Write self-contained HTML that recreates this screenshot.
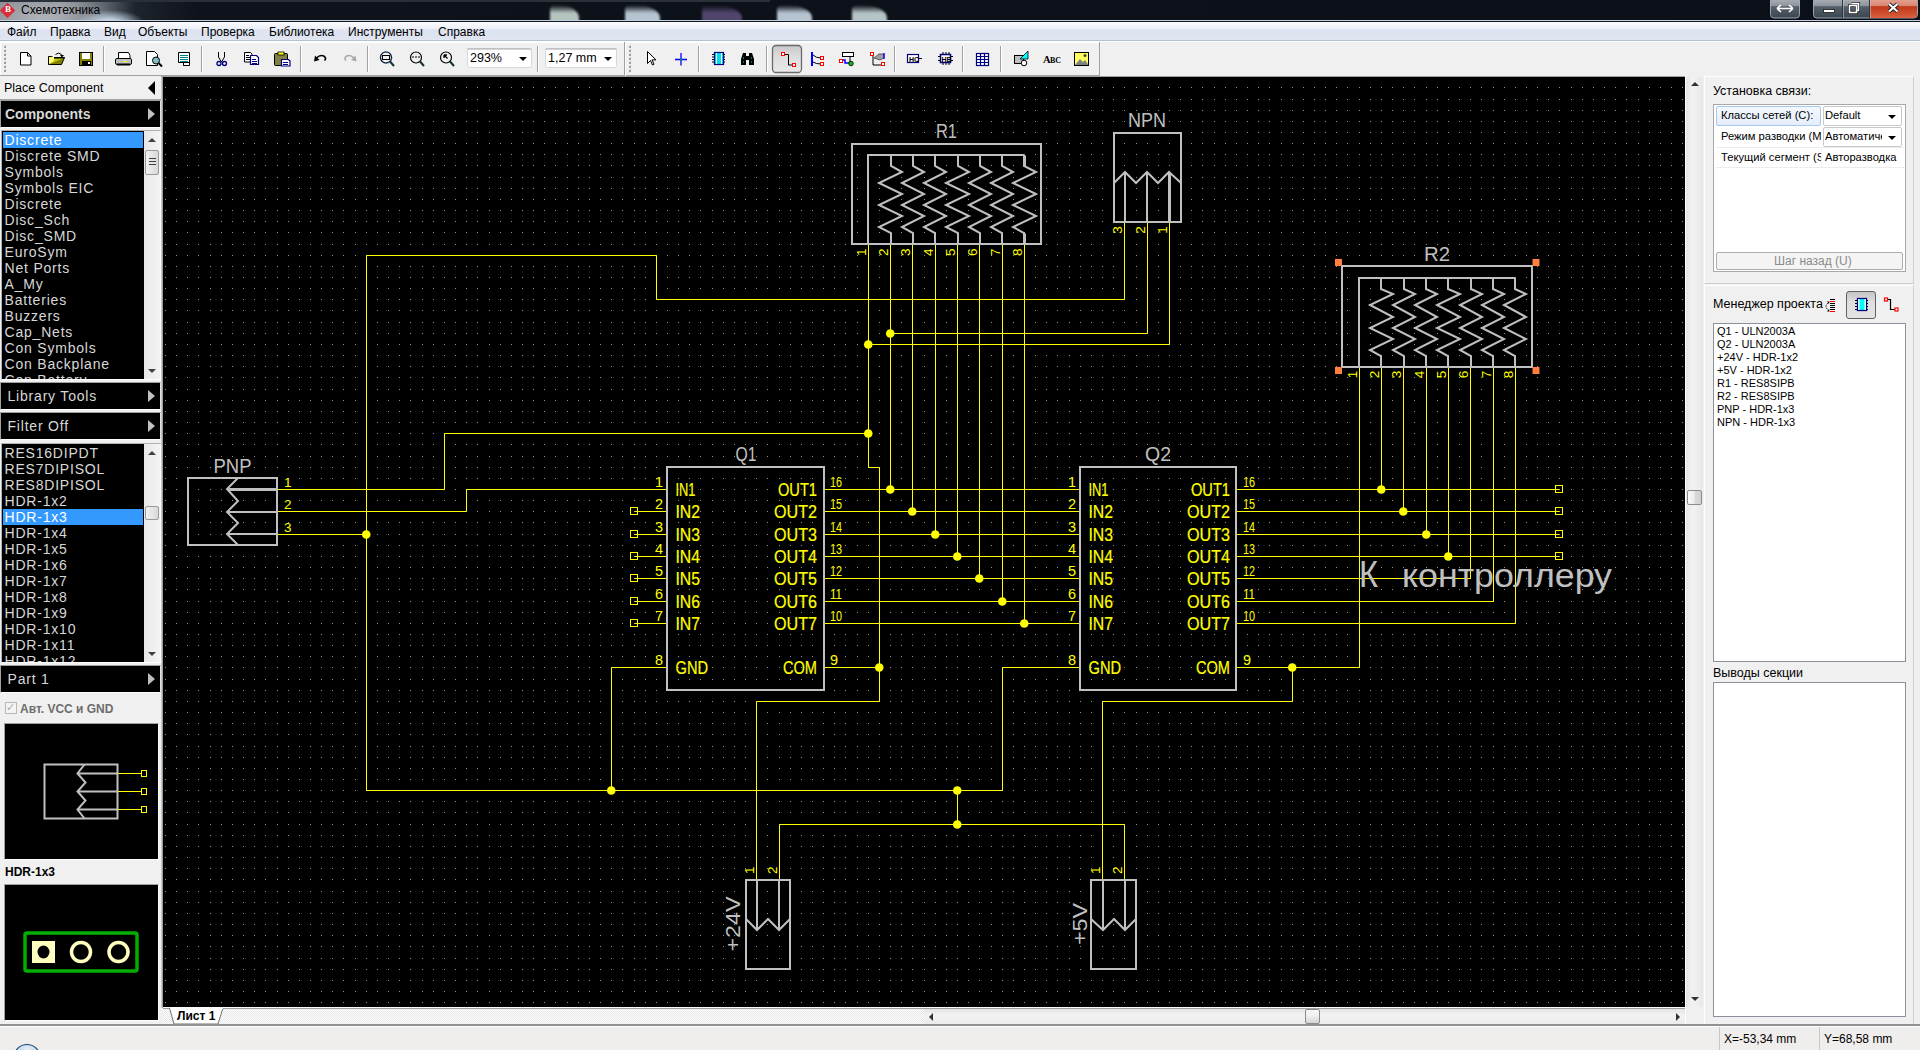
<!DOCTYPE html><html><head><meta charset="utf-8"><style>
*{margin:0;padding:0;box-sizing:border-box}
html,body{width:1920px;height:1050px;overflow:hidden;background:#f0f0f0;font-family:"Liberation Sans",sans-serif;font-size:12px;color:#000}
.a{position:absolute}
.t{position:absolute;white-space:nowrap;line-height:1}
</style></head><body><div class="a" style="left:0;top:0;width:1920px;height:21px;background:radial-gradient(ellipse 34px 12px at 110px 22px,#e4eef8 0%,rgba(200,220,240,0.6) 50%,rgba(200,220,240,0) 100%),radial-gradient(ellipse 70px 30px at 40px 18px,rgba(180,184,190,0.9),rgba(150,155,160,0) 100%),linear-gradient(90deg,#80858b 0px,#8e9398 60px,#5c636b 105px,#1e242c 135px,#0e121a 200px,#0b0f17 1920px)"></div>
<div class="a" style="left:0;top:0;width:770px;height:2px;background:#2a3038"></div>
<div class="a" style="left:550px;top:5px;width:29px;height:18px;background:linear-gradient(rgba(0,0,0,0),#c8d8d0 45%);border-radius:20% 70% 0 0;filter:blur(1.2px);opacity:0.9"></div>
<div class="a" style="left:625px;top:5px;width:35px;height:18px;background:linear-gradient(rgba(0,0,0,0),#c8d8e4 45%);border-radius:20% 70% 0 0;filter:blur(1.2px);opacity:0.9"></div>
<div class="a" style="left:702px;top:5px;width:40px;height:18px;background:linear-gradient(rgba(0,0,0,0),#8870b0 45%);border-radius:20% 70% 0 0;filter:blur(1.2px);opacity:0.55"></div>
<div class="a" style="left:777px;top:5px;width:35px;height:18px;background:linear-gradient(rgba(0,0,0,0),#c8d8e4 45%);border-radius:20% 70% 0 0;filter:blur(1.2px);opacity:0.9"></div>
<div class="a" style="left:852px;top:5px;width:35px;height:18px;background:linear-gradient(rgba(0,0,0,0),#c8d8d8 45%);border-radius:20% 70% 0 0;filter:blur(1.2px);opacity:0.9"></div>
<div class="a" style="left:0;top:20px;width:1920px;height:1px;background:#c7d0d8"></div>
<div class="a" style="left:0;top:21px;width:1920px;height:1px;background:#101828"></div>
<div class="a" style="left:2px;top:5px;width:11px;height:11px;background:#d83038;transform:rotate(45deg)"></div>
<div class="t" style="left:5px;top:5px;font-size:9px;color:#fff;font-family:Liberation Serif,serif;font-weight:bold">B</div>
<div class="t" style="left:21px;top:4px;font-size:12px;color:#000">Схемотехника</div>
<svg class="a" style="left:1760px;top:0" width="160" height="21"><defs><linearGradient id="wb" x1="0" y1="0" x2="0" y2="1"><stop offset="0" stop-color="#b4b8bc"/><stop offset="0.42" stop-color="#8c939a"/><stop offset="0.46" stop-color="#56606a"/><stop offset="1" stop-color="#3a4550"/></linearGradient><linearGradient id="wc" x1="0" y1="0" x2="0" y2="1"><stop offset="0" stop-color="#e8b0a0"/><stop offset="0.42" stop-color="#d88470"/><stop offset="0.46" stop-color="#c03818"/><stop offset="1" stop-color="#d86040"/></linearGradient></defs><rect x="10.5" y="-3" width="29" height="21" rx="3.5" fill="url(#wb)" stroke="#b8c0c8" stroke-opacity="0.8"/><rect x="53.5" y="-3" width="104" height="21" rx="3.5" fill="url(#wb)" stroke="#b8c0c8" stroke-opacity="0.8"/><path d="M109 -3h45q3 0 3 3v15q0 3-3 3h-45z" fill="url(#wc)"/><path d="M82.5 0v18M109.5 0v18" stroke="#303840"/><path d="M83.5 0v18M110.5 0v18" stroke="#c8d0d8" stroke-opacity="0.5"/><path d="M17 8.5h16M17 8.5l4-3.5M17 8.5l4 3.5M33 8.5l-4-3.5M33 8.5l-4 3.5" fill="none" stroke="#fff" stroke-width="1.6"/><rect x="63.5" y="9.5" width="11" height="3" fill="#fff" stroke="#1a1a1a" stroke-width="0.8"/><path d="M91.5 3.5h7v7h-2" fill="none" stroke="#1a1a1a" stroke-width="3"/><rect x="89.5" y="5.5" width="7" height="7" fill="none" stroke="#1a1a1a" stroke-width="3"/><path d="M91.5 3.5h7v7h-2" fill="none" stroke="#fff" stroke-width="1.6"/><rect x="89.5" y="5.5" width="7" height="7" fill="none" stroke="#fff" stroke-width="1.6"/><path d="M129 4l8.5 7.5M137.5 4l-8.5 7.5" stroke="#1a1a1a" stroke-width="3.8"/><path d="M129 4l8.5 7.5M137.5 4l-8.5 7.5" stroke="#fff" stroke-width="2.2"/></svg>
<div class="a" style="left:0;top:22px;width:1920px;height:19px;background:linear-gradient(#fcfcfe 0px,#eef1f8 6px,#dde3f0 8px,#dfe4f1 17px,#e6eaf4 18px);border-bottom:1px solid #b6bfd3"></div>
<div class="a" style="left:0;top:41px;width:1920px;height:1px;background:#fdfdfd"></div>
<div class="t" style="left:7px;top:26px;font-size:12px">Файл</div>
<div class="t" style="left:50px;top:26px;font-size:12px">Правка</div>
<div class="t" style="left:104px;top:26px;font-size:12px">Вид</div>
<div class="t" style="left:138px;top:26px;font-size:12px">Объекты</div>
<div class="t" style="left:201px;top:26px;font-size:12px">Проверка</div>
<div class="t" style="left:269px;top:26px;font-size:12px">Библиотека</div>
<div class="t" style="left:348px;top:26px;font-size:12px">Инструменты</div>
<div class="t" style="left:438px;top:26px;font-size:12px">Справка</div>
<div class="a" style="left:0;top:42px;width:1100px;height:34px;border-right:1px solid #a0a0a0;border-bottom:1px solid #a0a0a0;box-shadow:inset 1px 1px 0 #fff"></div>
<svg class="a" style="left:0;top:0" width="1100" height="80" font-family="Liberation Sans, sans-serif"><rect x="4" y="46" width="2" height="2" fill="#a0a0a0"/><rect x="5" y="45" width="1" height="1" fill="#c8c8c8"/><rect x="4" y="50" width="2" height="2" fill="#a0a0a0"/><rect x="5" y="49" width="1" height="1" fill="#c8c8c8"/><rect x="4" y="54" width="2" height="2" fill="#a0a0a0"/><rect x="5" y="53" width="1" height="1" fill="#c8c8c8"/><rect x="4" y="58" width="2" height="2" fill="#a0a0a0"/><rect x="5" y="57" width="1" height="1" fill="#c8c8c8"/><rect x="4" y="62" width="2" height="2" fill="#a0a0a0"/><rect x="5" y="61" width="1" height="1" fill="#c8c8c8"/><rect x="4" y="66" width="2" height="2" fill="#a0a0a0"/><rect x="5" y="65" width="1" height="1" fill="#c8c8c8"/><rect x="4" y="70" width="2" height="2" fill="#a0a0a0"/><rect x="5" y="69" width="1" height="1" fill="#c8c8c8"/><path d="M20.5 52.5h7l3.5 3.5v9h-10.5z" fill="#fff" stroke="#000"/><path d="M27.5 52.5v3.5h3.5" fill="none" stroke="#000"/><path d="M48.5 56.5v8h13l3-7h-11l-2-1z" fill="#808000" stroke="#000"/><path d="M48.5 64.5l3-6.5h13" fill="#c0c000" stroke="#000"/><path d="M49 57h5v4l-5 3z" fill="#ffff80"/><path d="M55.5 54.5q3-3 6 0l0 2" fill="none" stroke="#000"/><path d="M60 55l2 2.5 2-2.5" fill="#000"/><rect x="79.5" y="52.5" width="13" height="13" fill="#808000" stroke="#000"/><rect x="82" y="53" width="8" height="6" fill="#fff"/><rect x="82" y="61" width="9" height="4" fill="#000"/><rect x="88" y="62" width="2" height="2" fill="#fff"/><rect x="103" y="46" width="1" height="26" fill="#a0a0a0"/><rect x="104" y="46" width="1" height="26" fill="#fff"/><path d="M118.5 52.5h10l1.5 3v3h-11.5z" fill="#fff" stroke="#000"/><rect x="115.5" y="58.5" width="16" height="6" rx="1.5" fill="#c0c0c0" stroke="#000"/><rect x="117" y="63.5" width="13" height="2" fill="#000"/><rect x="123" y="61" width="4" height="1" fill="#ffff00"/><path d="M146.5 51.5h8l3 3v11h-11z" fill="#fff" stroke="#000"/><circle cx="156" cy="60.5" r="3.5" fill="#80c0c0" stroke="#000"/><path d="M158.5 63l3.5 3.5" stroke="#000" stroke-width="2"/><path d="M178.5 52.5h11v13h-6v-3h-5z" fill="#fff" stroke="#000"/><path d="M183.5 65.5v-3h6" fill="none" stroke="#000"/><path d="M180 55.5h8M180 57.5h8M180 59.5h8M180 61.5h8" stroke="#008080"/><rect x="201" y="46" width="1" height="26" fill="#a0a0a0"/><rect x="202" y="46" width="1" height="26" fill="#fff"/><path d="M218.5 52v5l3 5M224.5 52v5l-3 5" fill="none" stroke="#000"/><circle cx="219" cy="63.5" r="2" fill="none" stroke="#000080" stroke-width="1.3"/><circle cx="224.5" cy="63.5" r="2" fill="none" stroke="#000080" stroke-width="1.3"/><path d="M244.5 52.5h6l1.5 1.5v8h-7.5z" fill="#fff" stroke="#000"/><path d="M246 55.5h3M246 57.5h4M246 59.5h4" stroke="#000"/><path d="M250.5 55.5h6l2 2v7h-8z" fill="#fff" stroke="#000080" stroke-width="1.2"/><path d="M252 59.5h4M252 61.5h5M252 63.5h5" stroke="#000080"/><rect x="274.5" y="53.5" width="13" height="12" rx="1" fill="#808040" stroke="#000"/><rect x="278" y="52" width="6" height="3" fill="#ffff00" stroke="#000" stroke-width="0.8"/><path d="M281.5 59.5h7l1.5 1.5v5h-8.5z" fill="#fff" stroke="#000080" stroke-width="1.2"/><path d="M283 62.5h5M283 64.5h5" stroke="#000080"/><rect x="300" y="46" width="1" height="26" fill="#a0a0a0"/><rect x="301" y="46" width="1" height="26" fill="#fff"/><path d="M316.5 58q4-4 8-1.5q2 2 0 4" fill="none" stroke="#000" stroke-width="1.6"/><path d="M314 61.5l1-6 4.5 4.5z" fill="#000"/><path d="M354 58q-4-4-8-1.5q-2 2 0 4" fill="none" stroke="#a8a8a8" stroke-width="1.6"/><path d="M356.5 61.5l-1-6-4.5 4.5z" fill="#a8a8a8"/><rect x="367" y="46" width="1" height="26" fill="#a0a0a0"/><rect x="368" y="46" width="1" height="26" fill="#fff"/><circle cx="386" cy="57.5" r="5.5" fill="none" stroke="#000" stroke-width="1.2"/><path d="M390 61.5l4 4.5" stroke="#103030" stroke-width="2"/><circle cx="386" cy="57.5" r="5.8" fill="none" stroke="#2050a0" stroke-width="1" stroke-dasharray="1.5 1"/><rect x="382.5" y="55.5" width="7" height="4" fill="none" stroke="#000"/><circle cx="416" cy="57.5" r="5.5" fill="none" stroke="#000" stroke-width="1.2"/><path d="M420 61.5l4 4.5" stroke="#103030" stroke-width="2"/><path d="M412 57h8" stroke="#000" stroke-dasharray="2 1"/><circle cx="446" cy="57.5" r="5.5" fill="none" stroke="#000" stroke-width="1.2"/><path d="M450 61.5l4 4.5" stroke="#103030" stroke-width="2"/><path d="M444 55l3.5 3.5M444 55v3M444 55h3" stroke="#000" stroke-width="1.3"/><rect x="467.5" y="48.5" width="64" height="19" rx="2" fill="#fff" stroke="#d4d8e0"/><rect x="467.5" y="48.5" width="64" height="1" fill="#a8a8a8"/><text x="470" y="62" font-size="12.5" fill="#000" font-family="Liberation Sans, sans-serif">293%</text><path d="M519 57h8l-4 4z" fill="#000"/><rect x="537" y="46" width="1" height="26" fill="#a0a0a0"/><rect x="538" y="46" width="1" height="26" fill="#fff"/><rect x="545.5" y="48.5" width="71" height="19" rx="2" fill="#fff" stroke="#d4d8e0"/><rect x="545.5" y="48.5" width="71" height="1" fill="#a8a8a8"/><text x="548" y="62" font-size="12.5" fill="#000" font-family="Liberation Sans, sans-serif">1,27 mm</text><path d="M604 57h8l-4 4z" fill="#000"/><rect x="624" y="42" width="1" height="34" fill="#a0a0a0"/><rect x="625" y="42" width="1" height="34" fill="#fff"/><rect x="629" y="46" width="2" height="2" fill="#a0a0a0"/><rect x="630" y="45" width="1" height="1" fill="#c8c8c8"/><rect x="629" y="50" width="2" height="2" fill="#a0a0a0"/><rect x="630" y="49" width="1" height="1" fill="#c8c8c8"/><rect x="629" y="54" width="2" height="2" fill="#a0a0a0"/><rect x="630" y="53" width="1" height="1" fill="#c8c8c8"/><rect x="629" y="58" width="2" height="2" fill="#a0a0a0"/><rect x="630" y="57" width="1" height="1" fill="#c8c8c8"/><rect x="629" y="62" width="2" height="2" fill="#a0a0a0"/><rect x="630" y="61" width="1" height="1" fill="#c8c8c8"/><rect x="629" y="66" width="2" height="2" fill="#a0a0a0"/><rect x="630" y="65" width="1" height="1" fill="#c8c8c8"/><rect x="629" y="70" width="2" height="2" fill="#a0a0a0"/><rect x="630" y="69" width="1" height="1" fill="#c8c8c8"/><path d="M647.5 51.5v12l3-3 2 4.5 1.5-.8-2-4.3h4z" fill="#fff" stroke="#000"/><path d="M675 59.5h12M681 53v12.5" stroke="#0000ff" stroke-width="1.3"/><rect x="680" y="58.5" width="2" height="2" fill="#008080"/><rect x="698" y="46" width="1" height="26" fill="#a0a0a0"/><rect x="699" y="46" width="1" height="26" fill="#fff"/><path d="M712 54.5h2M712 57h2M712 59.5h2M712 62h2M723 54.5h2M723 57h2M723 59.5h2M723 62h2" stroke="#000"/><rect x="714.5" y="52.5" width="9" height="12" fill="#00e0e8" stroke="#000080" stroke-width="1.2"/><path d="M716.5 53v11M721.5 53v11" stroke="#fff"/><path d="M741 65v-6l2-6h3v12zM749 65v-12h3l2 6v6z" fill="#000"/><rect x="746" y="56" width="3" height="4" fill="#000"/><path d="M743 58h1M743 62h1M751 58h1M751 62h1" stroke="#00e0e0" stroke-width="1.2"/><rect x="766" y="46" width="1" height="26" fill="#a0a0a0"/><rect x="767" y="46" width="1" height="26" fill="#fff"/><defs><linearGradient id="pb" x1="0" y1="0" x2="0" y2="1"><stop offset="0" stop-color="#c8c8c8"/><stop offset="0.45" stop-color="#dedede"/><stop offset="1" stop-color="#e8e8e8"/></linearGradient></defs><rect x="772.5" y="45.5" width="29" height="27" rx="3.5" fill="url(#pb)" stroke="#6a6a6a" stroke-width="1.3"/><path d="M784 54.5h4.5v10.5h5" fill="none" stroke="#000"/><rect x="781.5" y="52.5" width="3" height="3" fill="#fff" stroke="#ff0000"/><rect x="792.5" y="63.5" width="3" height="3" fill="#fff" stroke="#ff0000"/><rect x="811" y="52" width="2" height="14" fill="#0000ff"/><path d="M813 55q3 3 8 3M813 62q3 2 8 2" fill="none" stroke="#000"/><rect x="820.5" y="56.5" width="3" height="3" fill="#fff" stroke="#f00"/><rect x="820.5" y="62.5" width="3" height="3" fill="#fff" stroke="#f00"/><rect x="842.5" y="52.5" width="11" height="4" fill="#fff" stroke="#000"/><path d="M850 57v6" stroke="#000"/><path d="M842 60h3v3h5" fill="none" stroke="#0000ff" stroke-width="1.5"/><rect x="839.5" y="59.5" width="3" height="3" fill="#fff" stroke="#f00"/><circle cx="851" cy="63.5" r="2.3" fill="#00c000" stroke="#000" stroke-width="0.8"/><path d="M873 54v11h10" fill="none" stroke="#000"/><path d="M874 58l5-4h5v4l-4 2z" fill="#a0a0a0" stroke="#404040" stroke-width="0.8"/><path d="M884 53v6" stroke="#0000ff" stroke-width="1.3"/><rect x="870.5" y="52.5" width="3" height="3" fill="#fff" stroke="#f00"/><rect x="881.5" y="62.5" width="3" height="3" fill="#fff" stroke="#f00"/><rect x="894" y="46" width="1" height="26" fill="#a0a0a0"/><rect x="895" y="46" width="1" height="26" fill="#fff"/><rect x="907.5" y="54.5" width="11" height="8" fill="#fff" stroke="#000080" stroke-width="1.2"/><path d="M919 58.5h3" stroke="#000"/><text x="909" y="61.5" font-size="7" font-weight="bold" font-family="Liberation Sans, sans-serif">HC</text><rect x="940.5" y="54.5" width="10" height="8" fill="#fff" stroke="#000080" stroke-width="1.5"/><path d="M943 52v2M946 52v2M949 52v2M943 63v2M946 63v2M949 63v2M938 56.5h2M938 60.5h2M951 56.5h2M951 60.5h2" stroke="#000"/><text x="941.5" y="61.5" font-size="7" font-weight="bold" font-family="Liberation Sans, sans-serif">HB</text><rect x="962" y="46" width="1" height="26" fill="#a0a0a0"/><rect x="963" y="46" width="1" height="26" fill="#fff"/><rect x="976.5" y="53.5" width="12" height="12" fill="#fff" stroke="#000080" stroke-width="1.2"/><path d="M980.5 53.5v12M984.5 53.5v12M976.5 56.5h12M976.5 59.5h12M976.5 62.5h12" stroke="#000080" stroke-width="1.2"/><rect x="1000" y="46" width="1" height="26" fill="#a0a0a0"/><rect x="1001" y="46" width="1" height="26" fill="#fff"/><rect x="1014.5" y="55.5" width="9" height="8" fill="#c0c0c0" stroke="#000"/><circle cx="1024" cy="63" r="2.8" fill="#fff" stroke="#000"/><path d="M1020 59l8-8v8z" fill="#00ffff" stroke="#000" stroke-width="0.8"/><text x="1043" y="62.5" font-size="10.5" font-family="Liberation Serif, serif" font-weight="bold" letter-spacing="-0.5">A</text><text x="1050" y="62.5" font-size="8" font-family="Liberation Serif, serif" font-weight="bold">BC</text><rect x="1074.5" y="52.5" width="14" height="13" fill="#ffff60" stroke="#000"/><path d="M1075 65l5-6 3 3 2-2 3.5 5z" fill="#808080"/><circle cx="1085" cy="55.5" r="1.5" fill="#404040"/></svg>
<div class="a" style="left:0;top:77px;width:161px;height:948px;background:#f0f0f0"></div>
<div class="t" style="left:4px;top:82px;font-size:12.5px">Place Component</div>
<div class="a" style="left:0;top:99px;width:161px;height:1px;background:#a0a0a0"></div>
<div class="a" style="left:148px;top:81px;width:0;height:0;border-top:7px solid transparent;border-bottom:7px solid transparent;border-right:7px solid #000"></div>
<div class="a" style="left:0;top:100px;width:161px;height:28px;border-top:1px solid #a0a0a0;border-left:1px solid #a0a0a0;border-bottom:1px solid #fff;border-right:1px solid #e0e0e0"></div>
<div class="a" style="left:1px;top:101px;width:159px;height:26px;background:#000"></div>
<div class="t" style="left:5px;top:107px;font-size:14px;font-weight:bold;color:#d8d8d8">Components</div>
<div class="a" style="left:148px;top:108px;width:0;height:0;border-top:6.5px solid transparent;border-bottom:6.5px solid transparent;border-left:7px solid #c0c0c0"></div>
<div class="a" style="left:1px;top:130px;width:160px;height:250px;background:#000;border:1px solid #b0b0b0;border-right-color:#fff;border-bottom-color:#fff;overflow:hidden">
<div class="a" style="left:1px;top:1px;width:140px;height:16px;background:#3399ff"></div>
<div class="t" style="left:2.5px;top:2px;font-size:14px;color:#ffffff;letter-spacing:0.8px">Discrete</div>
<div class="t" style="left:2.5px;top:18px;font-size:14px;color:#d8d8d8;letter-spacing:0.8px">Discrete SMD</div>
<div class="t" style="left:2.5px;top:34px;font-size:14px;color:#d8d8d8;letter-spacing:0.8px">Symbols</div>
<div class="t" style="left:2.5px;top:50px;font-size:14px;color:#d8d8d8;letter-spacing:0.8px">Symbols EIC</div>
<div class="t" style="left:2.5px;top:66px;font-size:14px;color:#d8d8d8;letter-spacing:0.8px">Discrete</div>
<div class="t" style="left:2.5px;top:82px;font-size:14px;color:#d8d8d8;letter-spacing:0.8px">Disc_Sch</div>
<div class="t" style="left:2.5px;top:98px;font-size:14px;color:#d8d8d8;letter-spacing:0.8px">Disc_SMD</div>
<div class="t" style="left:2.5px;top:114px;font-size:14px;color:#d8d8d8;letter-spacing:0.8px">EuroSym</div>
<div class="t" style="left:2.5px;top:130px;font-size:14px;color:#d8d8d8;letter-spacing:0.8px">Net Ports</div>
<div class="t" style="left:2.5px;top:146px;font-size:14px;color:#d8d8d8;letter-spacing:0.8px">A_My</div>
<div class="t" style="left:2.5px;top:162px;font-size:14px;color:#d8d8d8;letter-spacing:0.8px">Batteries</div>
<div class="t" style="left:2.5px;top:178px;font-size:14px;color:#d8d8d8;letter-spacing:0.8px">Buzzers</div>
<div class="t" style="left:2.5px;top:194px;font-size:14px;color:#d8d8d8;letter-spacing:0.8px">Cap_Nets</div>
<div class="t" style="left:2.5px;top:210px;font-size:14px;color:#d8d8d8;letter-spacing:0.8px">Con Symbols</div>
<div class="t" style="left:2.5px;top:226px;font-size:14px;color:#d8d8d8;letter-spacing:0.8px">Con Backplane</div>
<div class="t" style="left:2.5px;top:242px;font-size:14px;color:#d8d8d8;letter-spacing:0.8px">Con Battery</div>
<div class="a" style="left:142px;top:0;width:16px;height:248px;background:linear-gradient(90deg,#e8e8e8,#f4f4f4)"></div>
<div class="a" style="left:146px;top:7px;width:0;height:0;border-left:4px solid transparent;border-right:4px solid transparent;border-bottom:4px solid #404040"></div>
<div class="a" style="left:146px;top:238px;width:0;height:0;border-left:4px solid transparent;border-right:4px solid transparent;border-top:4px solid #404040"></div>
<div class="a" style="left:143px;top:19px;width:14px;height:25px;border:1px solid #9a9a9a;border-radius:2px;background:linear-gradient(90deg,#f2f2f2,#d8d8d8)"></div>
<div class="a" style="left:147px;top:27px;width:7px;height:7px;background:repeating-linear-gradient(#404040 0 1px,transparent 1px 3px)"></div>
</div>
<div class="a" style="left:0;top:382px;width:161px;height:28px;border-top:1px solid #a0a0a0;border-left:1px solid #a0a0a0;border-bottom:1px solid #fff;border-right:1px solid #e0e0e0"></div>
<div class="a" style="left:1px;top:383px;width:159px;height:26px;background:#000"></div>
<div class="t" style="left:7.5px;top:389px;font-size:14px;color:#d8d8d8;letter-spacing:0.8px">Library Tools</div>
<div class="a" style="left:148px;top:390px;width:0;height:0;border-top:6.5px solid transparent;border-bottom:6.5px solid transparent;border-left:7px solid #c0c0c0"></div>
<div class="a" style="left:0;top:412px;width:161px;height:28px;border-top:1px solid #a0a0a0;border-left:1px solid #a0a0a0;border-bottom:1px solid #fff;border-right:1px solid #e0e0e0"></div>
<div class="a" style="left:1px;top:413px;width:159px;height:26px;background:#000"></div>
<div class="t" style="left:7.5px;top:419px;font-size:14px;color:#d8d8d8;letter-spacing:0.8px">Filter Off</div>
<div class="a" style="left:148px;top:420px;width:0;height:0;border-top:6.5px solid transparent;border-bottom:6.5px solid transparent;border-left:7px solid #c0c0c0"></div>
<div class="a" style="left:1px;top:443px;width:160px;height:220px;background:#000;border:1px solid #b0b0b0;border-right-color:#fff;border-bottom-color:#fff;overflow:hidden">
<div class="t" style="left:2.5px;top:2px;font-size:14px;color:#d8d8d8;letter-spacing:0.8px">RES16DIPDT</div>
<div class="t" style="left:2.5px;top:18px;font-size:14px;color:#d8d8d8;letter-spacing:0.8px">RES7DIPISOL</div>
<div class="t" style="left:2.5px;top:34px;font-size:14px;color:#d8d8d8;letter-spacing:0.8px">RES8DIPISOL</div>
<div class="t" style="left:2.5px;top:50px;font-size:14px;color:#d8d8d8;letter-spacing:0.8px">HDR-1x2</div>
<div class="a" style="left:1px;top:65px;width:140px;height:16px;background:#3399ff"></div>
<div class="t" style="left:2.5px;top:66px;font-size:14px;color:#ffffff;letter-spacing:0.8px">HDR-1x3</div>
<div class="t" style="left:2.5px;top:82px;font-size:14px;color:#d8d8d8;letter-spacing:0.8px">HDR-1x4</div>
<div class="t" style="left:2.5px;top:98px;font-size:14px;color:#d8d8d8;letter-spacing:0.8px">HDR-1x5</div>
<div class="t" style="left:2.5px;top:114px;font-size:14px;color:#d8d8d8;letter-spacing:0.8px">HDR-1x6</div>
<div class="t" style="left:2.5px;top:130px;font-size:14px;color:#d8d8d8;letter-spacing:0.8px">HDR-1x7</div>
<div class="t" style="left:2.5px;top:146px;font-size:14px;color:#d8d8d8;letter-spacing:0.8px">HDR-1x8</div>
<div class="t" style="left:2.5px;top:162px;font-size:14px;color:#d8d8d8;letter-spacing:0.8px">HDR-1x9</div>
<div class="t" style="left:2.5px;top:178px;font-size:14px;color:#d8d8d8;letter-spacing:0.8px">HDR-1x10</div>
<div class="t" style="left:2.5px;top:194px;font-size:14px;color:#d8d8d8;letter-spacing:0.8px">HDR-1x11</div>
<div class="t" style="left:2.5px;top:210px;font-size:14px;color:#d8d8d8;letter-spacing:0.8px">HDR-1x12</div>
<div class="a" style="left:142px;top:0;width:16px;height:218px;background:linear-gradient(90deg,#e8e8e8,#f4f4f4)"></div>
<div class="a" style="left:146px;top:7px;width:0;height:0;border-left:4px solid transparent;border-right:4px solid transparent;border-bottom:4px solid #404040"></div>
<div class="a" style="left:146px;top:208px;width:0;height:0;border-left:4px solid transparent;border-right:4px solid transparent;border-top:4px solid #404040"></div>
<div class="a" style="left:143px;top:62px;width:14px;height:14px;border:1px solid #9a9a9a;border-radius:2px;background:linear-gradient(90deg,#f2f2f2,#d8d8d8)"></div>
</div>
<div class="a" style="left:0;top:665px;width:161px;height:28px;border-top:1px solid #a0a0a0;border-left:1px solid #a0a0a0;border-bottom:1px solid #fff;border-right:1px solid #e0e0e0"></div>
<div class="a" style="left:1px;top:666px;width:159px;height:26px;background:#000"></div>
<div class="t" style="left:7.5px;top:672px;font-size:14px;color:#d8d8d8;letter-spacing:0.8px">Part 1</div>
<div class="a" style="left:148px;top:673px;width:0;height:0;border-top:6.5px solid transparent;border-bottom:6.5px solid transparent;border-left:7px solid #c0c0c0"></div>
<div class="a" style="left:5px;top:702px;width:12px;height:12px;border:1px solid #b8b8b8;background:#f4f4f4"></div>
<div class="t" style="left:6px;top:702px;font-size:11px;color:#a8a8a8">&#10003;</div>
<div class="t" style="left:20px;top:703px;font-size:12px;font-weight:bold;color:#6d6d6d">Авт. VCC и GND</div>
<div class="a" style="left:4px;top:723px;width:155px;height:137px;background:#000;border:1px solid #a0a0a0;border-right-color:#fff;border-bottom-color:#fff"></div>
<svg class="a" style="left:0;top:0" width="165" height="1050"><rect x="44.5" y="764.5" width="73" height="54" fill="none" stroke="#c0c0c0" stroke-width="2"/><polyline points="84.5,764.5 77.5,773.5 85.5,782.5 77.5,791.5 85.5,800.5 77.5,809.5 84.5,818.5" fill="none" stroke="#c0c0c0" stroke-width="2"/><path d="M77.5 773.5H117.5M77.5 791.5H117.5M77.5 809.5H117.5" stroke="#c0c0c0" stroke-width="2"/><path d="M118 773.5H141M118 791.5H141M118 809.5H141" stroke="#ffff00" stroke-width="1"/><rect x="141.5" y="770.5" width="5" height="6" fill="none" stroke="#ffff00"/><rect x="141.5" y="788.5" width="5" height="6" fill="none" stroke="#ffff00"/><rect x="141.5" y="806.5" width="5" height="6" fill="none" stroke="#ffff00"/></svg>
<div class="t" style="left:5px;top:866px;font-size:12px;font-weight:bold">HDR-1x3</div>
<div class="a" style="left:4px;top:884px;width:155px;height:137px;background:#000;border:1px solid #a0a0a0;border-right-color:#fff;border-bottom-color:#fff"></div>
<svg class="a" style="left:0;top:0" width="165" height="1050"><rect x="25" y="933" width="112" height="38" rx="2" fill="none" stroke="#00b000" stroke-width="3.5"/><rect x="32" y="941" width="23" height="22" fill="#ffffc0"/><ellipse cx="43.5" cy="952" rx="6" ry="6.5" fill="#000"/><circle cx="81" cy="952" r="9.5" fill="none" stroke="#ffffc0" stroke-width="3.5"/><circle cx="118.5" cy="952" r="9.5" fill="none" stroke="#ffffc0" stroke-width="3.5"/></svg>
<div class="a" style="left:161px;top:76px;width:2px;height:932px;background:#a0a0a0;border-left:1px solid #c8c8c8"></div>
<div class="a" style="left:161px;top:76px;width:1525px;height:1px;background:#a0a0a0"></div>
<div class="a" style="left:163px;top:77px;width:1522px;height:930px;background:#000"></div>
<svg width="1920" height="1050" style="position:absolute;left:0;top:0" font-family="Liberation Sans, sans-serif"><defs><path id="dr" d="M165 0h1v1h-1zM176 0h1v1h-1zM187 0h1v1h-1zM198 0h1v1h-1zM210 0h1v1h-1zM221 0h1v1h-1zM232 0h1v1h-1zM243 0h1v1h-1zM254 0h1v1h-1zM265 0h1v1h-1zM277 0h1v1h-1zM288 0h1v1h-1zM299 0h1v1h-1zM310 0h1v1h-1zM321 0h1v1h-1zM332 0h1v1h-1zM343 0h1v1h-1zM355 0h1v1h-1zM366 0h1v1h-1zM377 0h1v1h-1zM388 0h1v1h-1zM399 0h1v1h-1zM410 0h1v1h-1zM422 0h1v1h-1zM433 0h1v1h-1zM444 0h1v1h-1zM455 0h1v1h-1zM466 0h1v1h-1zM477 0h1v1h-1zM489 0h1v1h-1zM500 0h1v1h-1zM511 0h1v1h-1zM522 0h1v1h-1zM533 0h1v1h-1zM544 0h1v1h-1zM555 0h1v1h-1zM567 0h1v1h-1zM578 0h1v1h-1zM589 0h1v1h-1zM600 0h1v1h-1zM611 0h1v1h-1zM622 0h1v1h-1zM634 0h1v1h-1zM645 0h1v1h-1zM656 0h1v1h-1zM667 0h1v1h-1zM678 0h1v1h-1zM689 0h1v1h-1zM700 0h1v1h-1zM712 0h1v1h-1zM723 0h1v1h-1zM734 0h1v1h-1zM745 0h1v1h-1zM756 0h1v1h-1zM767 0h1v1h-1zM779 0h1v1h-1zM790 0h1v1h-1zM801 0h1v1h-1zM812 0h1v1h-1zM823 0h1v1h-1zM834 0h1v1h-1zM845 0h1v1h-1zM857 0h1v1h-1zM868 0h1v1h-1zM879 0h1v1h-1zM890 0h1v1h-1zM901 0h1v1h-1zM912 0h1v1h-1zM924 0h1v1h-1zM935 0h1v1h-1zM946 0h1v1h-1zM957 0h1v1h-1zM968 0h1v1h-1zM979 0h1v1h-1zM991 0h1v1h-1zM1002 0h1v1h-1zM1013 0h1v1h-1zM1024 0h1v1h-1zM1035 0h1v1h-1zM1046 0h1v1h-1zM1057 0h1v1h-1zM1069 0h1v1h-1zM1080 0h1v1h-1zM1091 0h1v1h-1zM1102 0h1v1h-1zM1113 0h1v1h-1zM1124 0h1v1h-1zM1136 0h1v1h-1zM1147 0h1v1h-1zM1158 0h1v1h-1zM1169 0h1v1h-1zM1180 0h1v1h-1zM1191 0h1v1h-1zM1202 0h1v1h-1zM1214 0h1v1h-1zM1225 0h1v1h-1zM1236 0h1v1h-1zM1247 0h1v1h-1zM1258 0h1v1h-1zM1269 0h1v1h-1zM1281 0h1v1h-1zM1292 0h1v1h-1zM1303 0h1v1h-1zM1314 0h1v1h-1zM1325 0h1v1h-1zM1336 0h1v1h-1zM1347 0h1v1h-1zM1359 0h1v1h-1zM1370 0h1v1h-1zM1381 0h1v1h-1zM1392 0h1v1h-1zM1403 0h1v1h-1zM1414 0h1v1h-1zM1426 0h1v1h-1zM1437 0h1v1h-1zM1448 0h1v1h-1zM1459 0h1v1h-1zM1470 0h1v1h-1zM1481 0h1v1h-1zM1493 0h1v1h-1zM1504 0h1v1h-1zM1515 0h1v1h-1zM1526 0h1v1h-1zM1537 0h1v1h-1zM1548 0h1v1h-1zM1559 0h1v1h-1zM1571 0h1v1h-1zM1582 0h1v1h-1zM1593 0h1v1h-1zM1604 0h1v1h-1zM1615 0h1v1h-1zM1626 0h1v1h-1zM1638 0h1v1h-1zM1649 0h1v1h-1zM1660 0h1v1h-1zM1671 0h1v1h-1zM1682 0h1v1h-1z" fill="#909090"/></defs>
<use href="#dr" y="87"/>
<use href="#dr" y="99"/>
<use href="#dr" y="110"/>
<use href="#dr" y="121"/>
<use href="#dr" y="132"/>
<use href="#dr" y="143"/>
<use href="#dr" y="154"/>
<use href="#dr" y="165"/>
<use href="#dr" y="177"/>
<use href="#dr" y="188"/>
<use href="#dr" y="199"/>
<use href="#dr" y="210"/>
<use href="#dr" y="221"/>
<use href="#dr" y="232"/>
<use href="#dr" y="244"/>
<use href="#dr" y="255"/>
<use href="#dr" y="266"/>
<use href="#dr" y="277"/>
<use href="#dr" y="288"/>
<use href="#dr" y="299"/>
<use href="#dr" y="310"/>
<use href="#dr" y="322"/>
<use href="#dr" y="333"/>
<use href="#dr" y="344"/>
<use href="#dr" y="355"/>
<use href="#dr" y="366"/>
<use href="#dr" y="377"/>
<use href="#dr" y="389"/>
<use href="#dr" y="400"/>
<use href="#dr" y="411"/>
<use href="#dr" y="422"/>
<use href="#dr" y="433"/>
<use href="#dr" y="444"/>
<use href="#dr" y="456"/>
<use href="#dr" y="467"/>
<use href="#dr" y="478"/>
<use href="#dr" y="489"/>
<use href="#dr" y="500"/>
<use href="#dr" y="511"/>
<use href="#dr" y="522"/>
<use href="#dr" y="534"/>
<use href="#dr" y="545"/>
<use href="#dr" y="556"/>
<use href="#dr" y="567"/>
<use href="#dr" y="578"/>
<use href="#dr" y="589"/>
<use href="#dr" y="601"/>
<use href="#dr" y="612"/>
<use href="#dr" y="623"/>
<use href="#dr" y="634"/>
<use href="#dr" y="645"/>
<use href="#dr" y="656"/>
<use href="#dr" y="667"/>
<use href="#dr" y="679"/>
<use href="#dr" y="690"/>
<use href="#dr" y="701"/>
<use href="#dr" y="712"/>
<use href="#dr" y="723"/>
<use href="#dr" y="734"/>
<use href="#dr" y="746"/>
<use href="#dr" y="757"/>
<use href="#dr" y="768"/>
<use href="#dr" y="779"/>
<use href="#dr" y="790"/>
<use href="#dr" y="801"/>
<use href="#dr" y="812"/>
<use href="#dr" y="824"/>
<use href="#dr" y="835"/>
<use href="#dr" y="846"/>
<use href="#dr" y="857"/>
<use href="#dr" y="868"/>
<use href="#dr" y="879"/>
<use href="#dr" y="891"/>
<use href="#dr" y="902"/>
<use href="#dr" y="913"/>
<use href="#dr" y="924"/>
<use href="#dr" y="935"/>
<use href="#dr" y="946"/>
<use href="#dr" y="958"/>
<use href="#dr" y="969"/>
<use href="#dr" y="980"/>
<use href="#dr" y="991"/>
<use href="#dr" y="1002"/>
<polyline points="277.5,489.5 444.5,489.5 444.5,433.5 868.5,433.5" fill="none" stroke="#ffff00" stroke-width="1" />
<polyline points="277.5,511.5 466.5,511.5 466.5,489.5 667.5,489.5" fill="none" stroke="#ffff00" stroke-width="1" />
<polyline points="277.5,534.5 366.5,534.5" fill="none" stroke="#ffff00" stroke-width="1" />
<polyline points="1124.5,221.5 1124.5,299.5 656.5,299.5 656.5,255.5 366.5,255.5 366.5,790.5 1002.5,790.5 1002.5,667.5 1080.5,667.5" fill="none" stroke="#ffff00" stroke-width="1" />
<polyline points="1147.5,221.5 1147.5,333.5 890.5,333.5" fill="none" stroke="#ffff00" stroke-width="1" />
<polyline points="1169.5,221.5 1169.5,344.5 868.5,344.5" fill="none" stroke="#ffff00" stroke-width="1" />
<polyline points="868.5,244.5 868.5,467.5 879.5,467.5 879.5,701.5 756.5,701.5 756.5,879.5" fill="none" stroke="#ffff00" stroke-width="1" />
<polyline points="890.5,244.5 890.5,489.5" fill="none" stroke="#ffff00" stroke-width="1" />
<polyline points="912.5,244.5 912.5,511.5" fill="none" stroke="#ffff00" stroke-width="1" />
<polyline points="935.5,244.5 935.5,534.5" fill="none" stroke="#ffff00" stroke-width="1" />
<polyline points="957.5,244.5 957.5,556.5" fill="none" stroke="#ffff00" stroke-width="1" />
<polyline points="979.5,244.5 979.5,578.5" fill="none" stroke="#ffff00" stroke-width="1" />
<polyline points="1002.5,244.5 1002.5,601.5" fill="none" stroke="#ffff00" stroke-width="1" />
<polyline points="1024.5,244.5 1024.5,623.5" fill="none" stroke="#ffff00" stroke-width="1" />
<polyline points="823.5,489.5 1080.5,489.5" fill="none" stroke="#ffff00" stroke-width="1" />
<polyline points="823.5,511.5 1080.5,511.5" fill="none" stroke="#ffff00" stroke-width="1" />
<polyline points="823.5,534.5 1080.5,534.5" fill="none" stroke="#ffff00" stroke-width="1" />
<polyline points="823.5,556.5 1080.5,556.5" fill="none" stroke="#ffff00" stroke-width="1" />
<polyline points="823.5,578.5 1080.5,578.5" fill="none" stroke="#ffff00" stroke-width="1" />
<polyline points="823.5,601.5 1080.5,601.5" fill="none" stroke="#ffff00" stroke-width="1" />
<polyline points="823.5,623.5 1080.5,623.5" fill="none" stroke="#ffff00" stroke-width="1" />
<polyline points="823.5,667.5 879.5,667.5" fill="none" stroke="#ffff00" stroke-width="1" />
<polyline points="667.5,667.5 611.5,667.5 611.5,790.5" fill="none" stroke="#ffff00" stroke-width="1" />
<polyline points="1236.5,667.5 1359.5,667.5 1359.5,366.5" fill="none" stroke="#ffff00" stroke-width="1" />
<polyline points="1292.5,667.5 1292.5,701.5 1102.5,701.5 1102.5,879.5" fill="none" stroke="#ffff00" stroke-width="1" />
<polyline points="957.5,790.5 957.5,824.5" fill="none" stroke="#ffff00" stroke-width="1" />
<polyline points="779.5,879.5 779.5,824.5 1124.5,824.5 1124.5,879.5" fill="none" stroke="#ffff00" stroke-width="1" />
<polyline points="1236.5,489.5 1559.5,489.5" fill="none" stroke="#ffff00" stroke-width="1" />
<polyline points="1381.5,366.5 1381.5,489.5" fill="none" stroke="#ffff00" stroke-width="1" />
<rect x="1555.5" y="485.5" width="7" height="7" fill="none" stroke="#ffff00" stroke-width="1"/>
<polyline points="1236.5,511.5 1559.5,511.5" fill="none" stroke="#ffff00" stroke-width="1" />
<polyline points="1403.5,366.5 1403.5,511.5" fill="none" stroke="#ffff00" stroke-width="1" />
<rect x="1555.5" y="507.5" width="7" height="7" fill="none" stroke="#ffff00" stroke-width="1"/>
<polyline points="1236.5,534.5 1559.5,534.5" fill="none" stroke="#ffff00" stroke-width="1" />
<polyline points="1426.5,366.5 1426.5,534.5" fill="none" stroke="#ffff00" stroke-width="1" />
<rect x="1555.5" y="530.5" width="7" height="7" fill="none" stroke="#ffff00" stroke-width="1"/>
<polyline points="1236.5,556.5 1559.5,556.5" fill="none" stroke="#ffff00" stroke-width="1" />
<polyline points="1448.5,366.5 1448.5,556.5" fill="none" stroke="#ffff00" stroke-width="1" />
<rect x="1555.5" y="552.5" width="7" height="7" fill="none" stroke="#ffff00" stroke-width="1"/>
<polyline points="1236.5,578.5 1470.5,578.5 1470.5,366.5" fill="none" stroke="#ffff00" stroke-width="1" />
<polyline points="1236.5,601.5 1493.5,601.5 1493.5,366.5" fill="none" stroke="#ffff00" stroke-width="1" />
<polyline points="1236.5,623.5 1515.5,623.5 1515.5,366.5" fill="none" stroke="#ffff00" stroke-width="1" />
<polyline points="634.5,511.5 667.5,511.5" fill="none" stroke="#ffff00" stroke-width="1" />
<rect x="630.5" y="507.5" width="7" height="7" fill="none" stroke="#ffff00" stroke-width="1"/>
<polyline points="634.5,534.5 667.5,534.5" fill="none" stroke="#ffff00" stroke-width="1" />
<rect x="630.5" y="530.5" width="7" height="7" fill="none" stroke="#ffff00" stroke-width="1"/>
<polyline points="634.5,556.5 667.5,556.5" fill="none" stroke="#ffff00" stroke-width="1" />
<rect x="630.5" y="552.5" width="7" height="7" fill="none" stroke="#ffff00" stroke-width="1"/>
<polyline points="634.5,578.5 667.5,578.5" fill="none" stroke="#ffff00" stroke-width="1" />
<rect x="630.5" y="574.5" width="7" height="7" fill="none" stroke="#ffff00" stroke-width="1"/>
<polyline points="634.5,601.5 667.5,601.5" fill="none" stroke="#ffff00" stroke-width="1" />
<rect x="630.5" y="597.5" width="7" height="7" fill="none" stroke="#ffff00" stroke-width="1"/>
<polyline points="634.5,623.5 667.5,623.5" fill="none" stroke="#ffff00" stroke-width="1" />
<rect x="630.5" y="619.5" width="7" height="7" fill="none" stroke="#ffff00" stroke-width="1"/>
<circle cx="366.25" cy="534.5" r="4.3" fill="#ffff00"/>
<circle cx="611.25" cy="790.5" r="4.3" fill="#ffff00"/>
<circle cx="957.25" cy="790.5" r="4.3" fill="#ffff00"/>
<circle cx="957.25" cy="824.5" r="4.3" fill="#ffff00"/>
<circle cx="868.25" cy="344.5" r="4.3" fill="#ffff00"/>
<circle cx="890.25" cy="333.5" r="4.3" fill="#ffff00"/>
<circle cx="868.25" cy="433.5" r="4.3" fill="#ffff00"/>
<circle cx="879.25" cy="667.5" r="4.3" fill="#ffff00"/>
<circle cx="1292.25" cy="667.5" r="4.3" fill="#ffff00"/>
<circle cx="890.25" cy="489.5" r="4.3" fill="#ffff00"/>
<circle cx="912.25" cy="511.5" r="4.3" fill="#ffff00"/>
<circle cx="935.25" cy="534.5" r="4.3" fill="#ffff00"/>
<circle cx="957.25" cy="556.5" r="4.3" fill="#ffff00"/>
<circle cx="979.25" cy="578.5" r="4.3" fill="#ffff00"/>
<circle cx="1002.25" cy="601.5" r="4.3" fill="#ffff00"/>
<circle cx="1024.25" cy="623.5" r="4.3" fill="#ffff00"/>
<circle cx="1381.25" cy="489.5" r="4.3" fill="#ffff00"/>
<circle cx="1403.25" cy="511.5" r="4.3" fill="#ffff00"/>
<circle cx="1426.25" cy="534.5" r="4.3" fill="#ffff00"/>
<circle cx="1448.25" cy="556.5" r="4.3" fill="#ffff00"/>
<rect x="188" y="478" width="89" height="67" fill="none" stroke="#c0c0c0" stroke-width="2"/>
<polyline points="227,489 277,489" fill="none" stroke="#c0c0c0" stroke-width="2" stroke-linejoin="miter"/>
<polyline points="227,512 277,512" fill="none" stroke="#c0c0c0" stroke-width="2" stroke-linejoin="miter"/>
<polyline points="227,534 277,534" fill="none" stroke="#c0c0c0" stroke-width="2" stroke-linejoin="miter"/>
<polyline points="238,478 227,489 238,501 227,512 238,523 227,534 238,545" fill="none" stroke="#c0c0c0" stroke-width="2" stroke-linejoin="miter"/>
<rect x="1114" y="133" width="67" height="89" fill="none" stroke="#c0c0c0" stroke-width="2"/>
<polyline points="1125,172 1125,222" fill="none" stroke="#c0c0c0" stroke-width="2" stroke-linejoin="miter"/>
<polyline points="1147,172 1147,222" fill="none" stroke="#c0c0c0" stroke-width="2" stroke-linejoin="miter"/>
<polyline points="1169,172 1169,222" fill="none" stroke="#c0c0c0" stroke-width="2" stroke-linejoin="miter"/>
<polyline points="1114,183 1125,172 1136,183 1147,172 1158,183 1169,172 1181,183" fill="none" stroke="#c0c0c0" stroke-width="2" stroke-linejoin="miter"/>
<rect x="852" y="144" width="189" height="100" fill="none" stroke="#c0c0c0" stroke-width="2"/>
<polyline points="868,244 868,155 1024,155" fill="none" stroke="#c0c0c0" stroke-width="2" stroke-linejoin="miter"/>
<polyline points="891,155 891,166 902,172 879,183 902,194 879,205 902,216 879,227 891,233 891,244" fill="none" stroke="#c0c0c0" stroke-width="2" stroke-linejoin="miter"/>
<polyline points="913,155 913,166 924,172 902,183 924,194 902,205 924,216 902,227 913,233 913,244" fill="none" stroke="#c0c0c0" stroke-width="2" stroke-linejoin="miter"/>
<polyline points="935,155 935,166 946,172 924,183 946,194 924,205 946,216 924,227 935,233 935,244" fill="none" stroke="#c0c0c0" stroke-width="2" stroke-linejoin="miter"/>
<polyline points="958,155 958,166 969,172 946,183 969,194 946,205 969,216 946,227 958,233 958,244" fill="none" stroke="#c0c0c0" stroke-width="2" stroke-linejoin="miter"/>
<polyline points="980,155 980,166 991,172 969,183 991,194 969,205 991,216 969,227 980,233 980,244" fill="none" stroke="#c0c0c0" stroke-width="2" stroke-linejoin="miter"/>
<polyline points="1002,155 1002,166 1013,172 991,183 1013,194 991,205 1013,216 991,227 1002,233 1002,244" fill="none" stroke="#c0c0c0" stroke-width="2" stroke-linejoin="miter"/>
<polyline points="1024,155 1024,166 1036,172 1013,183 1036,194 1013,205 1036,216 1013,227 1024,233 1024,244" fill="none" stroke="#c0c0c0" stroke-width="2" stroke-linejoin="miter"/>
<rect x="1342" y="266" width="190" height="101" fill="none" stroke="#c0c0c0" stroke-width="2"/>
<polyline points="1359,367 1359,278 1515,278" fill="none" stroke="#c0c0c0" stroke-width="2" stroke-linejoin="miter"/>
<polyline points="1381,278 1381,289 1393,294 1370,305 1393,317 1370,328 1393,339 1370,350 1381,356 1381,367" fill="none" stroke="#c0c0c0" stroke-width="2" stroke-linejoin="miter"/>
<polyline points="1404,278 1404,289 1415,294 1393,305 1415,317 1393,328 1415,339 1393,350 1404,356 1404,367" fill="none" stroke="#c0c0c0" stroke-width="2" stroke-linejoin="miter"/>
<polyline points="1426,278 1426,289 1437,294 1415,305 1437,317 1415,328 1437,339 1415,350 1426,356 1426,367" fill="none" stroke="#c0c0c0" stroke-width="2" stroke-linejoin="miter"/>
<polyline points="1448,278 1448,289 1460,294 1437,305 1460,317 1437,328 1460,339 1437,350 1448,356 1448,367" fill="none" stroke="#c0c0c0" stroke-width="2" stroke-linejoin="miter"/>
<polyline points="1471,278 1471,289 1482,294 1460,305 1482,317 1460,328 1482,339 1460,350 1471,356 1471,367" fill="none" stroke="#c0c0c0" stroke-width="2" stroke-linejoin="miter"/>
<polyline points="1493,278 1493,289 1504,294 1482,305 1504,317 1482,328 1504,339 1482,350 1493,356 1493,367" fill="none" stroke="#c0c0c0" stroke-width="2" stroke-linejoin="miter"/>
<polyline points="1515,278 1515,289 1526,294 1504,305 1526,317 1504,328 1526,339 1504,350 1515,356 1515,367" fill="none" stroke="#c0c0c0" stroke-width="2" stroke-linejoin="miter"/>
<rect x="746" y="880" width="44" height="89" fill="none" stroke="#c0c0c0" stroke-width="2"/>
<polyline points="757,880 757,930" fill="none" stroke="#c0c0c0" stroke-width="2" stroke-linejoin="miter"/>
<polyline points="779,880 779,930" fill="none" stroke="#c0c0c0" stroke-width="2" stroke-linejoin="miter"/>
<polyline points="746,919 757,930 768,919 779,930 790,919" fill="none" stroke="#c0c0c0" stroke-width="2" stroke-linejoin="miter"/>
<rect x="1091" y="880" width="45" height="89" fill="none" stroke="#c0c0c0" stroke-width="2"/>
<polyline points="1103,880 1103,930" fill="none" stroke="#c0c0c0" stroke-width="2" stroke-linejoin="miter"/>
<polyline points="1125,880 1125,930" fill="none" stroke="#c0c0c0" stroke-width="2" stroke-linejoin="miter"/>
<polyline points="1091,919 1103,930 1114,919 1125,930 1136,919" fill="none" stroke="#c0c0c0" stroke-width="2" stroke-linejoin="miter"/>
<rect x="667" y="467" width="157" height="223" fill="none" stroke="#c0c0c0" stroke-width="2"/>
<rect x="1080" y="467" width="156" height="223" fill="none" stroke="#c0c0c0" stroke-width="2"/>
<polyline points="1024.5,155.5 1024.5,166.5" fill="none" stroke="#c0c0c0" stroke-width="3" stroke-linejoin="miter"/>
<polyline points="1024.5,233.5 1024.5,244.5" fill="none" stroke="#c0c0c0" stroke-width="3" stroke-linejoin="miter"/>
<polyline points="1169.5,172.5 1169.5,222.5" fill="none" stroke="#c0c0c0" stroke-width="3" stroke-linejoin="miter"/>
<polyline points="227.5,489.5 277.5,489.5" fill="none" stroke="#c0c0c0" stroke-width="3" stroke-linejoin="miter"/>
<rect x="1335.0" y="259.0" width="7" height="7" fill="#ff8040"/>
<rect x="1532.5" y="259.0" width="7" height="7" fill="#ff8040"/>
<rect x="1335.0" y="367.0" width="7" height="7" fill="#ff8040"/>
<rect x="1532.5" y="367.0" width="7" height="7" fill="#ff8040"/>
<text x="675.5" y="496" font-size="18" fill="#ffff00" text-anchor="start" textLength="20" lengthAdjust="spacingAndGlyphs" stroke="#ffff00" stroke-width="0.2">IN1</text>
<text x="817" y="496" font-size="18" fill="#ffff00" text-anchor="end" textLength="39" lengthAdjust="spacingAndGlyphs" stroke="#ffff00" stroke-width="0.2">OUT1</text>
<text x="663" y="487" font-size="14.5" fill="#ffff00" text-anchor="end" >1</text>
<text x="830" y="487" font-size="14" fill="#ffff00" text-anchor="start" textLength="12" lengthAdjust="spacingAndGlyphs" >16</text>
<text x="675.5" y="518" font-size="18" fill="#ffff00" text-anchor="start" textLength="24.5" lengthAdjust="spacingAndGlyphs" stroke="#ffff00" stroke-width="0.2">IN2</text>
<text x="817" y="518" font-size="18" fill="#ffff00" text-anchor="end" textLength="43" lengthAdjust="spacingAndGlyphs" stroke="#ffff00" stroke-width="0.2">OUT2</text>
<text x="663" y="509" font-size="14.5" fill="#ffff00" text-anchor="end" >2</text>
<text x="830" y="509" font-size="14" fill="#ffff00" text-anchor="start" textLength="12" lengthAdjust="spacingAndGlyphs" >15</text>
<text x="675.5" y="541" font-size="18" fill="#ffff00" text-anchor="start" textLength="24.5" lengthAdjust="spacingAndGlyphs" stroke="#ffff00" stroke-width="0.2">IN3</text>
<text x="817" y="541" font-size="18" fill="#ffff00" text-anchor="end" textLength="43" lengthAdjust="spacingAndGlyphs" stroke="#ffff00" stroke-width="0.2">OUT3</text>
<text x="663" y="532" font-size="14.5" fill="#ffff00" text-anchor="end" >3</text>
<text x="830" y="532" font-size="14" fill="#ffff00" text-anchor="start" textLength="12" lengthAdjust="spacingAndGlyphs" >14</text>
<text x="675.5" y="563" font-size="18" fill="#ffff00" text-anchor="start" textLength="24.5" lengthAdjust="spacingAndGlyphs" stroke="#ffff00" stroke-width="0.2">IN4</text>
<text x="817" y="563" font-size="18" fill="#ffff00" text-anchor="end" textLength="43" lengthAdjust="spacingAndGlyphs" stroke="#ffff00" stroke-width="0.2">OUT4</text>
<text x="663" y="554" font-size="14.5" fill="#ffff00" text-anchor="end" >4</text>
<text x="830" y="554" font-size="14" fill="#ffff00" text-anchor="start" textLength="12" lengthAdjust="spacingAndGlyphs" >13</text>
<text x="675.5" y="585" font-size="18" fill="#ffff00" text-anchor="start" textLength="24.5" lengthAdjust="spacingAndGlyphs" stroke="#ffff00" stroke-width="0.2">IN5</text>
<text x="817" y="585" font-size="18" fill="#ffff00" text-anchor="end" textLength="43" lengthAdjust="spacingAndGlyphs" stroke="#ffff00" stroke-width="0.2">OUT5</text>
<text x="663" y="576" font-size="14.5" fill="#ffff00" text-anchor="end" >5</text>
<text x="830" y="576" font-size="14" fill="#ffff00" text-anchor="start" textLength="12" lengthAdjust="spacingAndGlyphs" >12</text>
<text x="675.5" y="608" font-size="18" fill="#ffff00" text-anchor="start" textLength="24.5" lengthAdjust="spacingAndGlyphs" stroke="#ffff00" stroke-width="0.2">IN6</text>
<text x="817" y="608" font-size="18" fill="#ffff00" text-anchor="end" textLength="43" lengthAdjust="spacingAndGlyphs" stroke="#ffff00" stroke-width="0.2">OUT6</text>
<text x="663" y="599" font-size="14.5" fill="#ffff00" text-anchor="end" >6</text>
<text x="830" y="599" font-size="14" fill="#ffff00" text-anchor="start" textLength="12" lengthAdjust="spacingAndGlyphs" >11</text>
<text x="675.5" y="630" font-size="18" fill="#ffff00" text-anchor="start" textLength="24.5" lengthAdjust="spacingAndGlyphs" stroke="#ffff00" stroke-width="0.2">IN7</text>
<text x="817" y="630" font-size="18" fill="#ffff00" text-anchor="end" textLength="43" lengthAdjust="spacingAndGlyphs" stroke="#ffff00" stroke-width="0.2">OUT7</text>
<text x="663" y="621" font-size="14.5" fill="#ffff00" text-anchor="end" >7</text>
<text x="830" y="621" font-size="14" fill="#ffff00" text-anchor="start" textLength="12" lengthAdjust="spacingAndGlyphs" >10</text>
<text x="675.5" y="674" font-size="18" fill="#ffff00" text-anchor="start" textLength="32.5" lengthAdjust="spacingAndGlyphs" stroke="#ffff00" stroke-width="0.2">GND</text>
<text x="817" y="674" font-size="18" fill="#ffff00" text-anchor="end" textLength="34" lengthAdjust="spacingAndGlyphs" stroke="#ffff00" stroke-width="0.2">COM</text>
<text x="663" y="665" font-size="14.5" fill="#ffff00" text-anchor="end" >8</text>
<text x="830" y="665" font-size="14.5" fill="#ffff00" text-anchor="start" >9</text>
<text x="1088.5" y="496" font-size="18" fill="#ffff00" text-anchor="start" textLength="20" lengthAdjust="spacingAndGlyphs" stroke="#ffff00" stroke-width="0.2">IN1</text>
<text x="1230" y="496" font-size="18" fill="#ffff00" text-anchor="end" textLength="39" lengthAdjust="spacingAndGlyphs" stroke="#ffff00" stroke-width="0.2">OUT1</text>
<text x="1076" y="487" font-size="14.5" fill="#ffff00" text-anchor="end" >1</text>
<text x="1243" y="487" font-size="14" fill="#ffff00" text-anchor="start" textLength="12" lengthAdjust="spacingAndGlyphs" >16</text>
<text x="1088.5" y="518" font-size="18" fill="#ffff00" text-anchor="start" textLength="24.5" lengthAdjust="spacingAndGlyphs" stroke="#ffff00" stroke-width="0.2">IN2</text>
<text x="1230" y="518" font-size="18" fill="#ffff00" text-anchor="end" textLength="43" lengthAdjust="spacingAndGlyphs" stroke="#ffff00" stroke-width="0.2">OUT2</text>
<text x="1076" y="509" font-size="14.5" fill="#ffff00" text-anchor="end" >2</text>
<text x="1243" y="509" font-size="14" fill="#ffff00" text-anchor="start" textLength="12" lengthAdjust="spacingAndGlyphs" >15</text>
<text x="1088.5" y="541" font-size="18" fill="#ffff00" text-anchor="start" textLength="24.5" lengthAdjust="spacingAndGlyphs" stroke="#ffff00" stroke-width="0.2">IN3</text>
<text x="1230" y="541" font-size="18" fill="#ffff00" text-anchor="end" textLength="43" lengthAdjust="spacingAndGlyphs" stroke="#ffff00" stroke-width="0.2">OUT3</text>
<text x="1076" y="532" font-size="14.5" fill="#ffff00" text-anchor="end" >3</text>
<text x="1243" y="532" font-size="14" fill="#ffff00" text-anchor="start" textLength="12" lengthAdjust="spacingAndGlyphs" >14</text>
<text x="1088.5" y="563" font-size="18" fill="#ffff00" text-anchor="start" textLength="24.5" lengthAdjust="spacingAndGlyphs" stroke="#ffff00" stroke-width="0.2">IN4</text>
<text x="1230" y="563" font-size="18" fill="#ffff00" text-anchor="end" textLength="43" lengthAdjust="spacingAndGlyphs" stroke="#ffff00" stroke-width="0.2">OUT4</text>
<text x="1076" y="554" font-size="14.5" fill="#ffff00" text-anchor="end" >4</text>
<text x="1243" y="554" font-size="14" fill="#ffff00" text-anchor="start" textLength="12" lengthAdjust="spacingAndGlyphs" >13</text>
<text x="1088.5" y="585" font-size="18" fill="#ffff00" text-anchor="start" textLength="24.5" lengthAdjust="spacingAndGlyphs" stroke="#ffff00" stroke-width="0.2">IN5</text>
<text x="1230" y="585" font-size="18" fill="#ffff00" text-anchor="end" textLength="43" lengthAdjust="spacingAndGlyphs" stroke="#ffff00" stroke-width="0.2">OUT5</text>
<text x="1076" y="576" font-size="14.5" fill="#ffff00" text-anchor="end" >5</text>
<text x="1243" y="576" font-size="14" fill="#ffff00" text-anchor="start" textLength="12" lengthAdjust="spacingAndGlyphs" >12</text>
<text x="1088.5" y="608" font-size="18" fill="#ffff00" text-anchor="start" textLength="24.5" lengthAdjust="spacingAndGlyphs" stroke="#ffff00" stroke-width="0.2">IN6</text>
<text x="1230" y="608" font-size="18" fill="#ffff00" text-anchor="end" textLength="43" lengthAdjust="spacingAndGlyphs" stroke="#ffff00" stroke-width="0.2">OUT6</text>
<text x="1076" y="599" font-size="14.5" fill="#ffff00" text-anchor="end" >6</text>
<text x="1243" y="599" font-size="14" fill="#ffff00" text-anchor="start" textLength="12" lengthAdjust="spacingAndGlyphs" >11</text>
<text x="1088.5" y="630" font-size="18" fill="#ffff00" text-anchor="start" textLength="24.5" lengthAdjust="spacingAndGlyphs" stroke="#ffff00" stroke-width="0.2">IN7</text>
<text x="1230" y="630" font-size="18" fill="#ffff00" text-anchor="end" textLength="43" lengthAdjust="spacingAndGlyphs" stroke="#ffff00" stroke-width="0.2">OUT7</text>
<text x="1076" y="621" font-size="14.5" fill="#ffff00" text-anchor="end" >7</text>
<text x="1243" y="621" font-size="14" fill="#ffff00" text-anchor="start" textLength="12" lengthAdjust="spacingAndGlyphs" >10</text>
<text x="1088.5" y="674" font-size="18" fill="#ffff00" text-anchor="start" textLength="32.5" lengthAdjust="spacingAndGlyphs" stroke="#ffff00" stroke-width="0.2">GND</text>
<text x="1230" y="674" font-size="18" fill="#ffff00" text-anchor="end" textLength="34" lengthAdjust="spacingAndGlyphs" stroke="#ffff00" stroke-width="0.2">COM</text>
<text x="1076" y="665" font-size="14.5" fill="#ffff00" text-anchor="end" >8</text>
<text x="1243" y="665" font-size="14.5" fill="#ffff00" text-anchor="start" >9</text>
<text x="746" y="461" font-size="20" fill="#c0c0c0" text-anchor="middle" textLength="21" lengthAdjust="spacingAndGlyphs" >Q1</text>
<text x="1158" y="461" font-size="20" fill="#c0c0c0" text-anchor="middle" textLength="26" lengthAdjust="spacingAndGlyphs" >Q2</text>
<text x="946.5" y="138" font-size="20" fill="#c0c0c0" text-anchor="middle" textLength="21" lengthAdjust="spacingAndGlyphs" >R1</text>
<text x="1437" y="261" font-size="20" fill="#c0c0c0" text-anchor="middle" textLength="26" lengthAdjust="spacingAndGlyphs" >R2</text>
<text x="1147" y="127" font-size="20" fill="#c0c0c0" text-anchor="middle" textLength="38" lengthAdjust="spacingAndGlyphs" >NPN</text>
<text x="232.5" y="473" font-size="20" fill="#c0c0c0" text-anchor="middle" textLength="38" lengthAdjust="spacingAndGlyphs" >PNP</text>
<text x="284" y="487" font-size="13.5" fill="#ffff00" text-anchor="start" >1</text>
<text x="284" y="509" font-size="13.5" fill="#ffff00" text-anchor="start" >2</text>
<text x="284" y="532" font-size="13.5" fill="#ffff00" text-anchor="start" >3</text>
<text x="866" y="252.3" font-size="13.5" fill="#ffff00" text-anchor="middle" transform="rotate(-90 866 252.3)" >1</text>
<text x="888" y="252.3" font-size="13.5" fill="#ffff00" text-anchor="middle" transform="rotate(-90 888 252.3)" >2</text>
<text x="910" y="252.3" font-size="13.5" fill="#ffff00" text-anchor="middle" transform="rotate(-90 910 252.3)" >3</text>
<text x="933" y="252.3" font-size="13.5" fill="#ffff00" text-anchor="middle" transform="rotate(-90 933 252.3)" >4</text>
<text x="955" y="252.3" font-size="13.5" fill="#ffff00" text-anchor="middle" transform="rotate(-90 955 252.3)" >5</text>
<text x="977" y="252.3" font-size="13.5" fill="#ffff00" text-anchor="middle" transform="rotate(-90 977 252.3)" >6</text>
<text x="1000" y="252.3" font-size="13.5" fill="#ffff00" text-anchor="middle" transform="rotate(-90 1000 252.3)" >7</text>
<text x="1022" y="252.3" font-size="13.5" fill="#ffff00" text-anchor="middle" transform="rotate(-90 1022 252.3)" >8</text>
<text x="1357" y="374.4" font-size="13.5" fill="#ffff00" text-anchor="middle" transform="rotate(-90 1357 374.4)" >1</text>
<text x="1379" y="374.4" font-size="13.5" fill="#ffff00" text-anchor="middle" transform="rotate(-90 1379 374.4)" >2</text>
<text x="1401" y="374.4" font-size="13.5" fill="#ffff00" text-anchor="middle" transform="rotate(-90 1401 374.4)" >3</text>
<text x="1424" y="374.4" font-size="13.5" fill="#ffff00" text-anchor="middle" transform="rotate(-90 1424 374.4)" >4</text>
<text x="1446" y="374.4" font-size="13.5" fill="#ffff00" text-anchor="middle" transform="rotate(-90 1446 374.4)" >5</text>
<text x="1468" y="374.4" font-size="13.5" fill="#ffff00" text-anchor="middle" transform="rotate(-90 1468 374.4)" >6</text>
<text x="1491" y="374.4" font-size="13.5" fill="#ffff00" text-anchor="middle" transform="rotate(-90 1491 374.4)" >7</text>
<text x="1513" y="374.4" font-size="13.5" fill="#ffff00" text-anchor="middle" transform="rotate(-90 1513 374.4)" >8</text>
<text x="1122" y="230" font-size="13.5" fill="#ffff00" text-anchor="middle" transform="rotate(-90 1122 230)" >3</text>
<text x="1145" y="230" font-size="13.5" fill="#ffff00" text-anchor="middle" transform="rotate(-90 1145 230)" >2</text>
<text x="1167" y="230" font-size="13.5" fill="#ffff00" text-anchor="middle" transform="rotate(-90 1167 230)" >1</text>
<text x="754" y="874" font-size="13.5" fill="#ffff00" text-anchor="start" transform="rotate(-90 754 874)" >1</text>
<text x="777" y="874" font-size="13.5" fill="#ffff00" text-anchor="start" transform="rotate(-90 777 874)" >2</text>
<text x="1100" y="874" font-size="13.5" fill="#ffff00" text-anchor="start" transform="rotate(-90 1100 874)" >1</text>
<text x="1122" y="874" font-size="13.5" fill="#ffff00" text-anchor="start" transform="rotate(-90 1122 874)" >2</text>
<text x="740" y="924" font-size="21" fill="#c0c0c0" text-anchor="middle" textLength="55" lengthAdjust="spacingAndGlyphs" transform="rotate(-90 740 924)" >+24V</text>
<text x="1087" y="924" font-size="21" fill="#c0c0c0" text-anchor="middle" textLength="42" lengthAdjust="spacingAndGlyphs" transform="rotate(-90 1087 924)" >+5V</text>
<text x="1359" y="587" font-size="36" fill="#c0c0c0" text-anchor="start" textLength="19" lengthAdjust="spacingAndGlyphs" >К</text>
<text x="1402" y="587" font-size="33" fill="#c0c0c0" text-anchor="start" textLength="210" lengthAdjust="spacingAndGlyphs" >контроллеру</text></svg>
<div class="a" style="left:1685px;top:76px;width:19px;height:950px;background:#f0f0f0;border-left:1px solid #fff"></div>
<div class="a" style="left:1686px;top:77px;width:17px;height:930px;background:linear-gradient(90deg,#e6e6e6,#f2f2f2 40%,#e8e8e8)"></div>
<div class="a" style="left:1691px;top:82px;width:0;height:0;border-left:4px solid transparent;border-right:4px solid transparent;border-bottom:4px solid #303030"></div>
<div class="a" style="left:1691px;top:997px;width:0;height:0;border-left:4px solid transparent;border-right:4px solid transparent;border-top:4px solid #303030"></div>
<div class="a" style="left:1687px;top:490px;width:15px;height:15px;border:1px solid #8c8c8c;border-radius:2px;background:linear-gradient(90deg,#f8f8f8,#ececec 45%,#d8d8dc 55%,#d0d0d4)"></div>
<div class="a" style="left:163px;top:1007px;width:1522px;height:19px;background:#fff;border-top:1px solid #fff;border-bottom:1px solid #a0a0a0"><div class="a" style="left:0;top:0;width:1522px;height:1px;background:#a0a0a0"></div><div class="a" style="left:0;top:1px;width:1522px;height:16px;background:repeating-conic-gradient(#fff 0 25%,#e6e6e6 0 50%);background-size:2px 2px"></div></div>
<svg class="a" style="left:0;top:0" width="240" height="1050"><polygon points="169.5,1008 223,1008 218,1024 174,1024" fill="#fff" stroke="#707070" stroke-width="1"/><line x1="170" y1="1008" x2="223" y2="1008" stroke="#fff" stroke-width="2"/></svg>
<div class="t" style="left:177px;top:1010px;font-size:12px;font-weight:bold">Лист 1</div>
<div class="a" style="left:924px;top:1009px;width:761px;height:16px;background:linear-gradient(#e4e4e4,#f2f2f2 40%,#ececec)"></div>
<div class="a" style="left:929px;top:1013px;width:0;height:0;border-top:4px solid transparent;border-bottom:4px solid transparent;border-right:4px solid #303030"></div>
<div class="a" style="left:1676px;top:1013px;width:0;height:0;border-top:4px solid transparent;border-bottom:4px solid transparent;border-left:4px solid #303030"></div>
<div class="a" style="left:1305px;top:1009px;width:15px;height:15px;border:1px solid #8c8c8c;border-radius:2px;background:linear-gradient(#f6f6f6,#f0f0f0 45%,#d4d4d8)"></div>
<div class="a" style="left:1704px;top:76px;width:210px;height:208px;border:1px solid #d0d0d0;border-left-color:#fff;border-top-color:#fff;background:#f0f0f0"></div>
<div class="t" style="left:1713px;top:85px;font-size:12.5px">Установка связи:</div>
<div class="a" style="left:1713px;top:104px;width:193px;height:168px;background:#fff;border:1px solid #a8a8a8"></div>
<div class="a" style="left:1716px;top:106px;width:105px;height:20px;background:linear-gradient(#f4f8fe,#e4eefb);border:1px solid #a8c8f0;border-radius:2px"></div>
<div class="t" style="left:1721px;top:110px;font-size:11.2px">Классы сетей (C):</div>
<div class="a" style="left:1823px;top:106px;width:79px;height:20px;background:#fff;border:1px solid #c8c8c8;border-radius:2px"></div>
<div class="t" style="left:1825px;top:110px;font-size:11.2px">Default</div>
<div class="a" style="left:1888px;top:115px;width:0;height:0;border-left:4px solid transparent;border-right:4px solid transparent;border-top:4px solid #000"></div>
<div class="a" style="left:1823px;top:127px;width:79px;height:20px;background:#fff;border:1px solid #c8c8c8;border-radius:2px"></div>
<div class="t" style="left:1721px;top:131px;font-size:11.2px;width:100px;overflow:hidden">Режим разводки (M)</div>
<div class="t" style="left:1825px;top:131px;font-size:11.2px;width:57px;overflow:hidden">Автоматическая</div>
<div class="a" style="left:1888px;top:136px;width:0;height:0;border-left:4px solid transparent;border-right:4px solid transparent;border-top:4px solid #000"></div>
<div class="t" style="left:1721px;top:152px;font-size:11.2px;width:100px;overflow:hidden">Текущий сегмент (S)</div>
<div class="t" style="left:1825px;top:152px;font-size:11.2px">Авторазводка</div>
<div class="a" style="left:1716px;top:167px;width:188px;height:1px;background:#ececec"></div>
<div class="a" style="left:1716px;top:147px;width:188px;height:1px;background:#ececec"></div>
<div class="a" style="left:1821px;top:147px;width:1px;height:21px;background:#f0f0f0"></div>
<div class="a" style="left:1716px;top:252px;width:187px;height:18px;border:1px solid #adadad;border-radius:2px;background:#f4f4f4"></div>
<div class="t" style="left:1774px;top:255px;font-size:12px;color:#8a8a8a">Шаг назад (U)</div>
<div class="a" style="left:1704px;top:285px;width:210px;height:740px;border:1px solid #d0d0d0;border-left-color:#fff;border-top-color:#fff;background:#f0f0f0"></div>
<div class="t" style="left:1713px;top:298px;font-size:12.5px">Менеджер проекта</div>
<div class="a" style="left:1846px;top:291px;width:30px;height:28px;border:1.5px solid #606060;border-radius:3px;background:linear-gradient(#c4c4c4,#dedede 40%,#e4e4e4)"></div>
<svg class="a" style="left:1820px;top:286px" width="90" height="38"><path d="M10 13.5h5M10 15.5h5M10 17.5h5M10 19.5h5M10 21.5h5M10 23.5h5" stroke="#000"/><path d="M10 15.5h5M10 25.5h5" stroke="#f00"/><path d="M8 17q-4 3 0 7" fill="none" stroke="#000" stroke-dasharray="1.2 .8"/><path d="M7 15.5l2.5 0 -.5 2.5z M7 25.5l2.5 0 -.5 -2.5z" fill="#000"/><path d="M35 14.5h2M35 17.5h2M35 20.5h2M35 23.5h2M46 14.5h2M46 17.5h2M46 20.5h2M46 23.5h2" stroke="#000"/><rect x="37.5" y="12.5" width="9" height="12" fill="#00ffff" stroke="#000080" stroke-width="1.3"/><path d="M38.8 13v11M45.2 13v11" stroke="#fff" stroke-width="1.3"/><path d="M67 13.5h3.5v10h5" fill="none" stroke="#000" stroke-width="1.2"/><rect x="64.5" y="12" width="3" height="3" fill="#fff" stroke="#f00" stroke-width="1.2"/><rect x="75" y="22" width="3" height="3" fill="#fff" stroke="#f00" stroke-width="1.2"/></svg>
<div class="a" style="left:1713px;top:323px;width:193px;height:339px;background:#fff;border:1px solid #8a919a"></div>
<div class="t" style="left:1717px;top:326px;font-size:11px">Q1 - ULN2003A</div>
<div class="t" style="left:1717px;top:339px;font-size:11px">Q2 - ULN2003A</div>
<div class="t" style="left:1717px;top:352px;font-size:11px">+24V - HDR-1x2</div>
<div class="t" style="left:1717px;top:365px;font-size:11px">+5V - HDR-1x2</div>
<div class="t" style="left:1717px;top:378px;font-size:11px">R1 - RES8SIPB</div>
<div class="t" style="left:1717px;top:391px;font-size:11px">R2 - RES8SIPB</div>
<div class="t" style="left:1717px;top:404px;font-size:11px">PNP - HDR-1x3</div>
<div class="t" style="left:1717px;top:417px;font-size:11px">NPN - HDR-1x3</div>
<div class="t" style="left:1713px;top:667px;font-size:12.5px">Выводы секции</div>
<div class="a" style="left:1713px;top:682px;width:193px;height:335px;background:#fff;border:1px solid #8a919a"></div>
<div class="a" style="left:0;top:1024px;width:1920px;height:2px;background:#909090"></div>
<div class="a" style="left:0;top:1026px;width:1920px;height:24px;background:#f0eded;border-top:1px solid #fff"></div>
<div class="a" style="left:1719px;top:1027px;width:1px;height:23px;background:#c8c8c8"></div>
<div class="a" style="left:1819px;top:1027px;width:1px;height:23px;background:#c8c8c8"></div>
<div class="t" style="left:1724px;top:1033px;font-size:12px">X=-53,34 mm</div>
<div class="t" style="left:1824px;top:1033px;font-size:12px">Y=68,58 mm</div>
<div class="a" style="left:14px;top:1044px;width:26px;height:24px;border-radius:50%;background:radial-gradient(ellipse at 50% 30%,#e8f0f8,#a8c4dc);border:1.5px solid #104878"></div></body></html>
